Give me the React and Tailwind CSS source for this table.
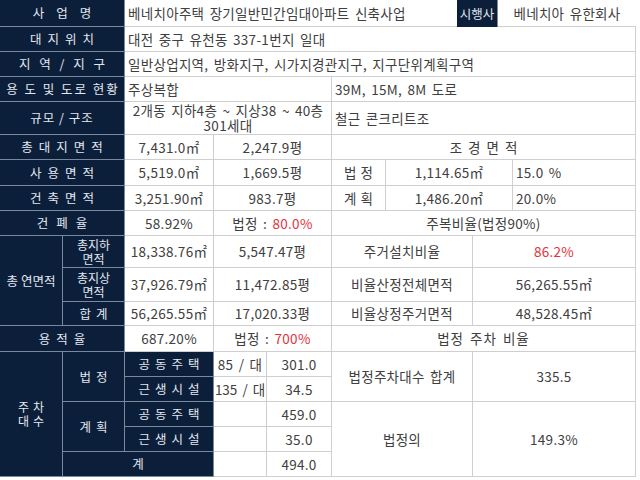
import React from "react";

const D = "bg-[#0b1f3a] text-[#e3e7ee] border-r border-b border-[#7b889b] flex items-center justify-center text-center text-[12.5px] leading-[14px]";
const W = "bg-white text-[#404040] border-r border-b border-[#cfcfcf] flex items-center text-[13.5px] leading-[15px] tracking-[0.3px] [word-spacing:2px]";
const C = W + " justify-center text-center";
const L = W + " justify-start pl-[3px]";

function Cell({ cls, c, r, children }) {
  return (
    <div className={cls} style={{ gridColumn: c, gridRow: r }}>
      {children}
    </div>
  );
}

const Red = ({ children }) => <span className="text-[#e5323c]">{children}</span>;

export default function App() {
  return (
    <div
      className="w-[640px] h-[480px] bg-white overflow-hidden"
      style={{ fontFamily: '"Noto Sans CJK KR", "Noto Sans", sans-serif' }}
    >
      <div className="grid w-[636px] grid-cols-[63px_62px_89px_53px_65px_54px_71px_16px_25px_15px_123px] grid-rows-[27px_25px_25px_25px_33px_25px_26px_25px_25px_32px_34px_24px_26px_25px_25px_25px_25px_25px]">
        {/* 사업명 */}
        <Cell cls={D + " tracking-[12px] pl-[12px]"} c="1 / 3" r="1">사업명</Cell>
        <Cell cls={L.replace("border-r ", "")} c="3 / 8" r="1">베네치아주택 장기일반민간임대아파트 신축사업</Cell>
        <Cell cls={D + " border-b-0"} c="8 / 10" r="1">시행사</Cell>
        <Cell cls={C.replace("border-r ", "")} c="10 / 12" r="1">베네치아 유한회사</Cell>

        <Cell cls={D + " tracking-[6px] pl-[6px]"} c="1 / 3" r="2">대지위치</Cell>
        <Cell cls={L} c="3 / 12" r="2">대전 중구 유천동 337-1번지 일대</Cell>

        <Cell cls={D + " tracking-[3px] pl-[3px]"} c="1 / 3" r="3">지 역 / 지 구</Cell>
        <Cell cls={L} c="3 / 12" r="3">일반상업지역, 방화지구, 시가지경관지구, 지구단위계획구역</Cell>

        <Cell cls={D + " tracking-[2px] pl-[2px]"} c="1 / 3" r="4">용 도 및 도로 현황</Cell>
        <Cell cls={L} c="3 / 6" r="4">주상복합</Cell>
        <Cell cls={L} c="6 / 12" r="4">39M, 15M, 8M 도로</Cell>

        <Cell cls={D + " tracking-[1px]"} c="1 / 3" r="5">규모 / 구조</Cell>
        <Cell cls={C + " flex-col"} c="3 / 6" r="5">
          <span>2개동 지하4층 ~ 지상38 ~ 40층</span>
          <span>301세대</span>
        </Cell>
        <Cell cls={L} c="6 / 12" r="5">철근 콘크리트조</Cell>

        <Cell cls={D + " tracking-[6px] pl-[6px]"} c="1 / 3" r="6">총대지면적</Cell>
        <Cell cls={C} c="3 / 4" r="6">7,431.0㎡</Cell>
        <Cell cls={C} c="4 / 6" r="6">2,247.9평</Cell>
        <Cell cls={C + " tracking-[6px] pl-[6px]"} c="6 / 12" r="6">조경면적</Cell>

        <Cell cls={D + " tracking-[6px] pl-[6px]"} c="1 / 3" r="7">사용면적</Cell>
        <Cell cls={C} c="3 / 4" r="7">5,519.0㎡</Cell>
        <Cell cls={C} c="4 / 6" r="7">1,669.5평</Cell>
        <Cell cls={C + " tracking-[4px] pl-[4px]"} c="6 / 7" r="7">법정</Cell>
        <Cell cls={C} c="7 / 11" r="7">1,114.65㎡</Cell>
        <Cell cls={L} c="11 / 12" r="7">15.0 %</Cell>

        <Cell cls={D + " tracking-[6px] pl-[6px]"} c="1 / 3" r="8">건축면적</Cell>
        <Cell cls={C} c="3 / 4" r="8">3,251.90㎡</Cell>
        <Cell cls={C} c="4 / 6" r="8">983.7평</Cell>
        <Cell cls={C + " tracking-[4px] pl-[4px]"} c="6 / 7" r="8">계획</Cell>
        <Cell cls={C} c="7 / 11" r="8">1,486.20㎡</Cell>
        <Cell cls={L} c="11 / 12" r="8">20.0%</Cell>

        <Cell cls={D + " tracking-[8px] pl-[8px]"} c="1 / 3" r="9">건폐율</Cell>
        <Cell cls={C} c="3 / 4" r="9">58.92%</Cell>
        <Cell cls={C} c="4 / 6" r="9">
          <span>
            법정 : <Red>80.0%</Red>
          </span>
        </Cell>
        <Cell cls={C} c="6 / 12" r="9">주복비율(법정90%)</Cell>

        {/* 총 연면적 */}
        <Cell cls={D} c="1 / 2" r="10 / 13">총 연면적</Cell>
        <Cell cls={D + " flex-col text-[12px] leading-[14px]"} c="2 / 3" r="10">
          <span>총지하</span>
          <span>면적</span>
        </Cell>
        <Cell cls={C} c="3 / 4" r="10">18,338.76㎡</Cell>
        <Cell cls={C} c="4 / 6" r="10">5,547.47평</Cell>
        <Cell cls={C} c="6 / 9" r="10">주거설치비율</Cell>
        <Cell cls={C} c="9 / 12" r="10">
          <Red>86.2%</Red>
        </Cell>

        <Cell cls={D + " flex-col text-[12px] leading-[14px]"} c="2 / 3" r="11">
          <span>총지상</span>
          <span>면적</span>
        </Cell>
        <Cell cls={C} c="3 / 4" r="11">37,926.79㎡</Cell>
        <Cell cls={C} c="4 / 6" r="11">11,472.85평</Cell>
        <Cell cls={C} c="6 / 9" r="11">비율산정전체면적</Cell>
        <Cell cls={C} c="9 / 12" r="11">56,265.55㎡</Cell>

        <Cell cls={D + " tracking-[5px] pl-[5px]"} c="2 / 3" r="12">합계</Cell>
        <Cell cls={C} c="3 / 4" r="12">56,265.55㎡</Cell>
        <Cell cls={C} c="4 / 6" r="12">17,020.33평</Cell>
        <Cell cls={C} c="6 / 9" r="12">비율상정주거면적</Cell>
        <Cell cls={C} c="9 / 12" r="12">48,528.45㎡</Cell>

        <Cell cls={D + " tracking-[6px] pl-[6px]"} c="1 / 3" r="13">용적율</Cell>
        <Cell cls={C} c="3 / 4" r="13">687.20%</Cell>
        <Cell cls={C} c="4 / 6" r="13">
          <span>
            법정 : <Red>700%</Red>
          </span>
        </Cell>
        <Cell cls={C + " tracking-[1px]"} c="6 / 12" r="13">법정 주차 비율</Cell>

        {/* 주차대수 */}
        <Cell cls={D + " flex-col tracking-[4px] pl-[4px] text-[12px] leading-[14px]"} c="1 / 2" r="14 / 19">
          <span>주차</span>
          <span>대수</span>
        </Cell>
        <Cell cls={D + " tracking-[5px] pl-[5px]"} c="2 / 3" r="14 / 16">법정</Cell>
        <Cell cls={D + " tracking-[5px] pl-[5px]"} c="3 / 4" r="14">공동주택</Cell>
        <Cell cls={C} c="4 / 5" r="14">85 / 대</Cell>
        <Cell cls={C} c="5 / 6" r="14">301.0</Cell>
        <Cell cls={C} c="6 / 9" r="14 / 16">법정주차대수 합계</Cell>
        <Cell cls={C} c="9 / 12" r="14 / 16">335.5</Cell>

        <Cell cls={D + " tracking-[5px] pl-[5px]"} c="3 / 4" r="15">근생시설</Cell>
        <Cell cls={C + " tracking-normal [word-spacing:0px]"} c="4 / 5" r="15">135 / 대</Cell>
        <Cell cls={C} c="5 / 6" r="15">34.5</Cell>

        <Cell cls={D + " tracking-[5px] pl-[5px]"} c="2 / 3" r="16 / 18">계획</Cell>
        <Cell cls={D + " tracking-[5px] pl-[5px]"} c="3 / 4" r="16">공동주택</Cell>
        <Cell cls={C} c="4 / 5" r="16"></Cell>
        <Cell cls={C} c="5 / 6" r="16">459.0</Cell>
        <Cell cls={C} c="6 / 9" r="16 / 19">법정의</Cell>
        <Cell cls={C} c="9 / 12" r="16 / 19">149.3%</Cell>

        <Cell cls={D + " tracking-[5px] pl-[5px]"} c="3 / 4" r="17">근생시설</Cell>
        <Cell cls={C} c="4 / 5" r="17"></Cell>
        <Cell cls={C} c="5 / 6" r="17">35.0</Cell>

        <Cell cls={D} c="2 / 4" r="18">계</Cell>
        <Cell cls={C} c="4 / 5" r="18"></Cell>
        <Cell cls={C} c="5 / 6" r="18">494.0</Cell>
      </div>
    </div>
  );
}
